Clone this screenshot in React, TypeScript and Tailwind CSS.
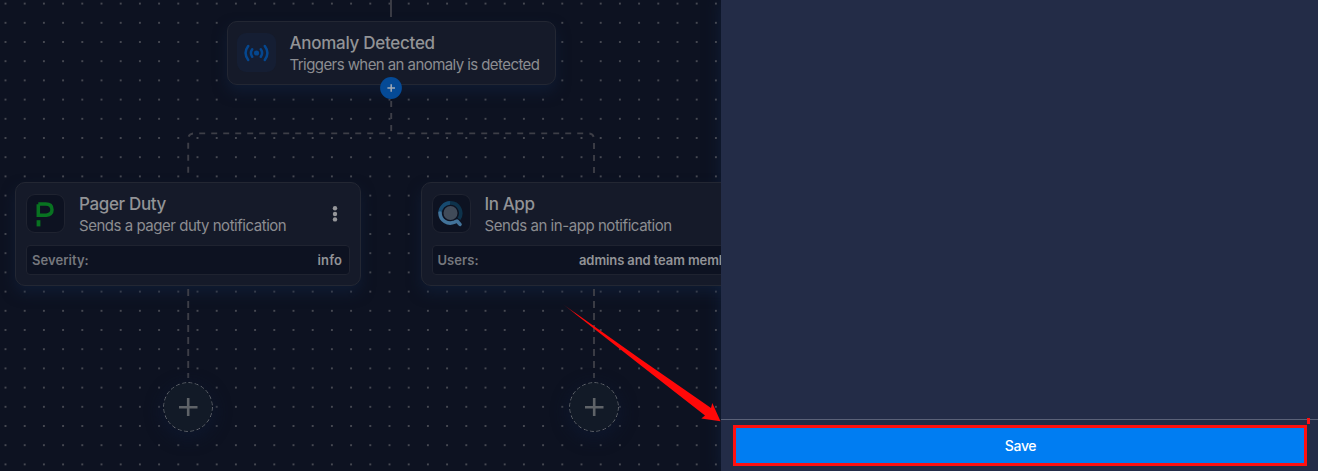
import type { ReactNode } from "react";

function CanvasLayer() {
  return (
    <svg className="absolute inset-0" width="721" height="471" fill="none">
      <defs>
        <pattern id="dots" x="-4.1" y="-6" width="19.2" height="19.2" patternUnits="userSpaceOnUse">
          <circle cx="9.6" cy="9.6" r="0.85" fill="#62636a" />
        </pattern>
      </defs>
      <rect width="721" height="471" fill="url(#dots)" />
    </svg>
  );
}

function Edges() {
  return (
    <svg className="absolute inset-0" width="721" height="471" fill="none" stroke="#3d3e47" strokeWidth="1.9">
      <path d="M391 0V17" />
      <path d="M391.2 101V133" strokeDasharray="6 6" />
      <path d="M391.2 133.4H194Q188.2 133.4 188.2 139.4V173" strokeDasharray="6 6" strokeDashoffset="6" />
      <path d="M391.2 133.4H588Q594 133.4 594 139.4V173" strokeDasharray="6 6" strokeDashoffset="-6" />
      <path d="M188.2 289V378" strokeDasharray="7 5" />
      <path d="M594 289V378" strokeDasharray="7 5" />
    </svg>
  );
}

function Heading({ title, text, titleClass, textClass }: { title: string; text: string; titleClass: string; textClass: string }) {
  return (
    <div className="flex flex-col whitespace-nowrap">
      <span className={`text-[17px] leading-[22px] font-medium text-[#929396] ${titleClass}`}>{title}</span>
      <span className={`text-[15px] leading-[21px] text-[#8c8d91] ${textClass}`}>{text}</span>
    </div>
  );
}

function ActionCard({ place, icon, heading, label, value, valueClass, menu }: { place: string; icon: ReactNode; heading: ReactNode; label: string; value: string; valueClass: string; menu?: boolean }) {
  return (
    <div className={`absolute top-[181.5px] flex h-[104.5px] w-[346px] flex-col rounded-[10px] border-[1.3px] border-[#232733] bg-[#151a29] px-[10px] pt-[11.5px] shadow-[0_7px_14px_0_rgba(18,35,66,0.5)] ${place}`}>
      <div className="flex h-[39px] items-center">
        <div className="mr-[14px] flex size-[39px] shrink-0 items-center justify-center rounded-[9px] border border-[#1f2330] bg-[#0d1221]">{icon}</div>
        <div className="pt-[2px]">{heading}</div>
        {menu && (
          <svg className="mr-[12px] ml-auto" width="6" height="16" fill="#96979a">
            <circle cx="3" cy="2.3" r="2.2" />
            <circle cx="3" cy="8" r="2.2" />
            <circle cx="3" cy="13.4" r="2.2" />
          </svg>
        )}
      </div>
      <div className="mt-[12px] flex h-[29.5px] items-center justify-between rounded-[4px] border border-[#1f2330] bg-[#0d1221] pt-[2px] pr-[7px] pl-[5px] text-[13px] font-semibold whitespace-nowrap">
        <span className="tracking-[0.05px] text-[#75777d]">{label}</span>
        <span className={`text-[#929397] ${valueClass}`}>{value}</span>
      </div>
    </div>
  );
}

function PagerIcon() {
  return (
    <svg className="relative -left-[1px]" width="19" height="26" viewBox="0 0 19 26">
      <path d="M3.3 3.2V14.2H11.3Q17 13.4 17 8.7Q17 3 10.7 3H3.3" fill="none" stroke="#087321" strokeWidth="3.5" />
      <path d="M1.6 19.2H5.4V25.4H1.6Z" fill="#087321" />
    </svg>
  );
}

function LensIcon() {
  return (
    <svg className="relative -left-[1px]" width="25" height="26" viewBox="0 0 25 26" fill="none">
      <circle cx="12.5" cy="12" r="7" fill="#414b59" />
      <path d="M12 1.9A10.3 10.3 0 0 1 20.9 18" stroke="#0d324b" strokeWidth="3.6" />
      <path d="M12 1.9A10.3 10.3 0 0 0 2 12" stroke="#164a70" strokeWidth="3.6" />
      <path d="M2 12A10.3 10.3 0 0 0 16.5 21.2L19 20L22 23.4" stroke="#42739a" strokeWidth="3.6" strokeLinejoin="round" strokeLinecap="round" />
    </svg>
  );
}

function AddNode({ place }: { place: string }) {
  return (
    <svg className={`absolute top-[382px] rounded-full shadow-[0_5px_15px_2px_rgba(14,24,49,0.65)] ${place}`} width="50" height="50" fill="none">
      <circle cx="25" cy="25" r="24.5" fill="#121a27" stroke="#666a71" strokeDasharray="4 2.4" />
      <path d="M25.2 16V34M16 25.3H34.5" stroke="#5f6368" strokeWidth="2.6" />
    </svg>
  );
}

export default function App() {
  return (
    <main className="relative flex h-[471px] w-[1318px] overflow-hidden bg-[#0d1221] font-['Inter',sans-serif]">
      <section className="relative h-full w-[721px] shrink-0 overflow-hidden">
        <CanvasLayer />

        <div className="absolute top-[20.5px] left-[226.5px] flex h-[64.5px] w-[329px] items-center rounded-[10px] border-[1.3px] border-[#232733] bg-[#151a29] pl-[9.5px] shadow-[0_7px_14px_0_rgba(18,35,66,0.5)]">
          <div className="mr-[13.5px] flex size-[39px] shrink-0 items-center justify-center rounded-[9px] bg-[#151e33]">
            <svg width="25" height="18" viewBox="0 0 25 18" fill="none" stroke="#05478f" strokeWidth="2.5" strokeLinecap="round">
              <circle cx="12.5" cy="9" r="2.6" fill="#05478f" stroke="none" />
              <path d="M8.2 5.2Q5.6 9 8.2 12.8M16.8 5.2Q19.4 9 16.8 12.8M4.2 2Q-1 9 4.2 16M20.8 2Q26 9 20.8 16" />
            </svg>
          </div>
          <div className="pt-[1px]">
            <Heading title="Anomaly Detected" text="Triggers when an anomaly is detected" titleClass="tracking-[-0.28px]" textClass="tracking-[-0.57px]" />
          </div>
        </div>

        <ActionCard
          place="left-[15px]"
          icon={<PagerIcon />}
          heading={<Heading title="Pager Duty" text="Sends a pager duty notification" titleClass="tracking-[-0.35px]" textClass="tracking-[-0.47px]" />}
          label="Severity:"
          value="info"
          valueClass="tracking-[0.1px]"
          menu
        />
        <ActionCard
          place="left-[420.5px]"
          icon={<LensIcon />}
          heading={<Heading title="In App" text="Sends an in-app notification" titleClass="tracking-[-0.4px]" textClass="tracking-[-0.44px]" />}
          label="Users:"
          value="admins and team members"
          valueClass="tracking-[-0.1px] absolute left-[157.5px]"
        />

        <Edges />
        <AddNode place="left-[163px]" />
        <AddNode place="left-[569px]" />
        <svg className="absolute top-[77px] left-[380px]" width="22" height="22" fill="none">
          <circle cx="11" cy="11" r="10.9" fill="#054a96" />
          <path d="M11.2 7.2V14.8M7.4 11H15" stroke="#a3abb5" strokeWidth="1.5" />
        </svg>
      </section>

      <aside className="flex h-full w-[597px] shrink-0 flex-col bg-[#232c47] shadow-[0_0_14px_rgba(17,31,58,0.9)]">
        <div className="flex-1" />
        <footer className="h-[52px] border-t border-[#5a6177] pt-[5px] pl-[12px]">
          <button className="flex h-[41px] w-[574px] items-center justify-center border-[3px] border-[#ff1010] bg-[#007df2] pl-[1px] text-[14px] font-medium tracking-[-0.3px] text-white">
            Save
          </button>
        </footer>
      </aside>

      <svg className="absolute inset-0" width="1318" height="471">
        <defs>
          <linearGradient id="tail" gradientUnits="userSpaceOnUse" x1="562" y1="304" x2="576" y2="314">
            <stop offset="0" stopColor="#ff0808" stopOpacity="0" />
            <stop offset="1" stopColor="#ff0808" />
          </linearGradient>
        </defs>
        <path d="M562 303.5L640 358.8L711 408L712.3 403L720.5 421.2L701.3 418.6L705 415.5L640 364.8Z" fill="url(#tail)" />
        <path d="M1307 418H1310V424H1307Z" fill="#ff1010" />
      </svg>
    </main>
  );
}
